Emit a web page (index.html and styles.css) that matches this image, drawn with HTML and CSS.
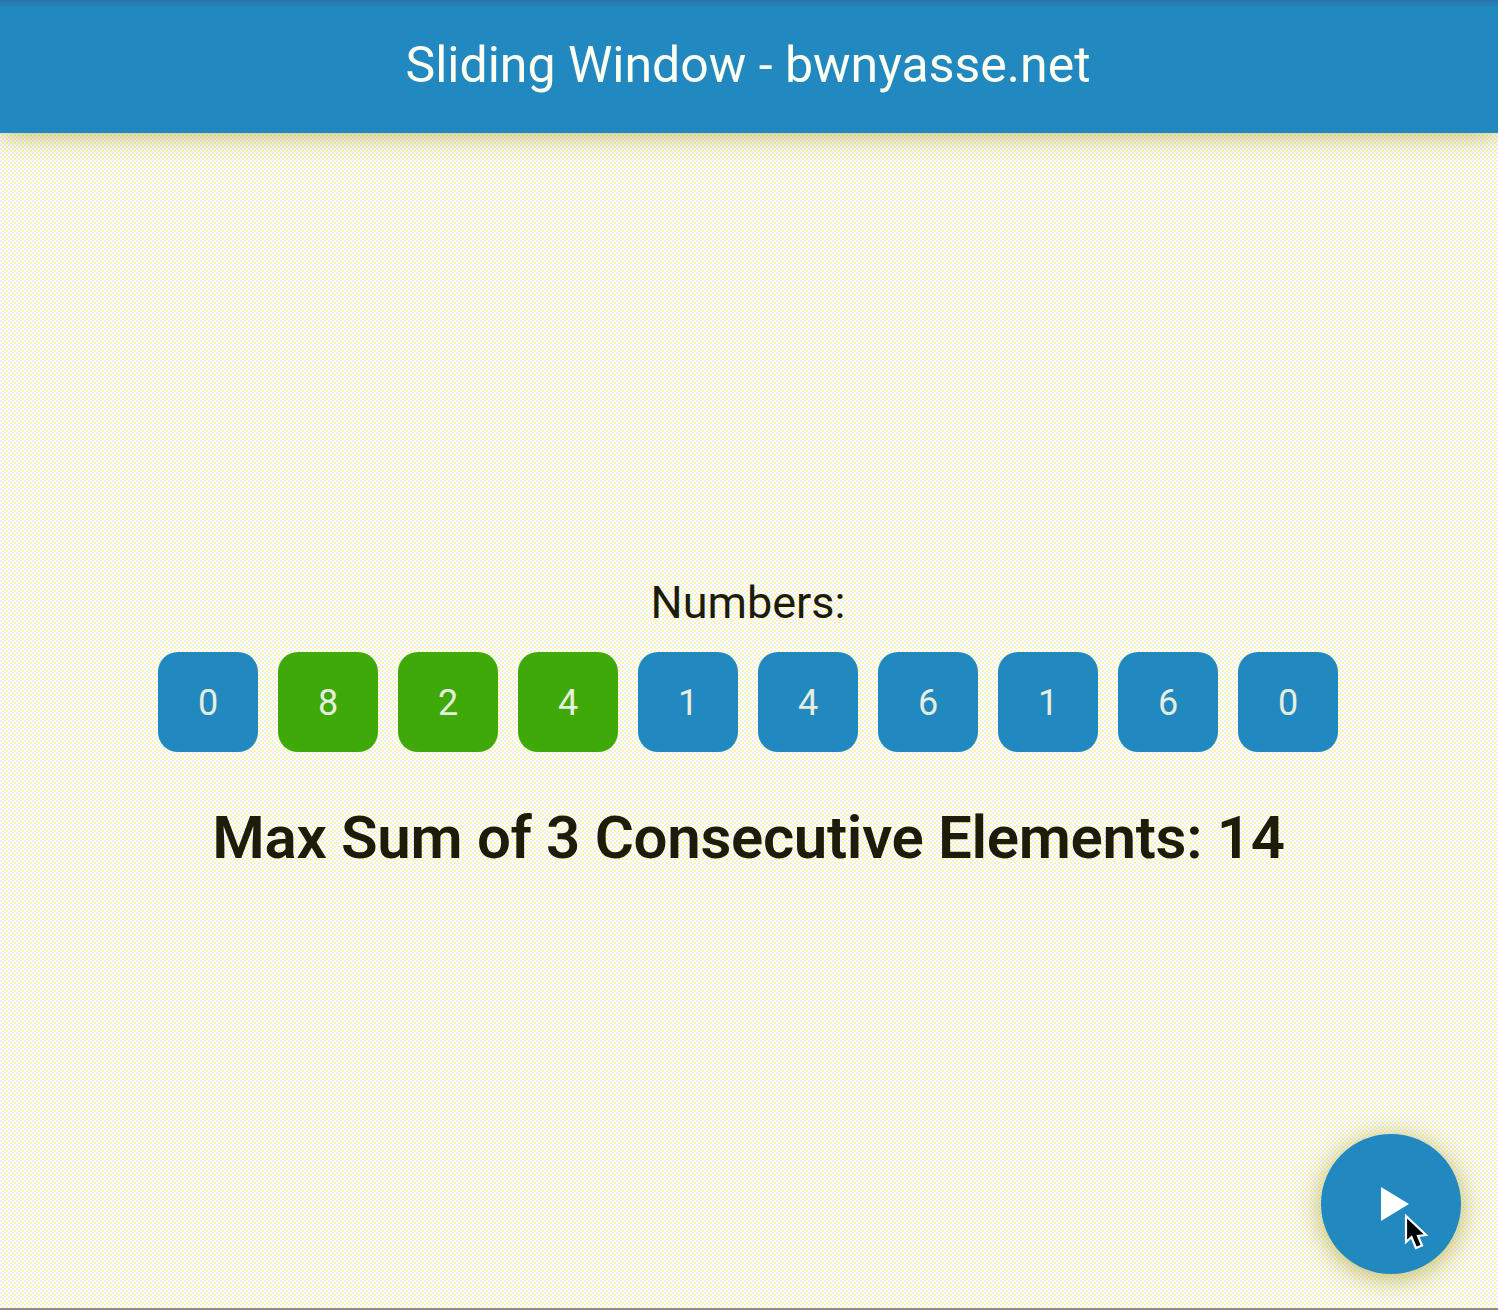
FILE: index.html
```html
<!DOCTYPE html>
<html lang="en">
<head>
    <meta charset="UTF-8">
    <meta name="viewport" content="width=device-width, initial-scale=1.0">
    <title>Sliding Window - bwnyasse.net</title>
    <link rel="stylesheet" href="styles.css">
</head>
<body>
    <header class="app-bar">
        <h1>Sliding Window - bwnyasse.net</h1>
    </header>
    <main class="content">
        <p class="numbers-label">Numbers:</p>
        <div class="numbers">
            <div class="cell">0</div>
            <div class="cell active">8</div>
            <div class="cell active">2</div>
            <div class="cell active">4</div>
            <div class="cell">1</div>
            <div class="cell">4</div>
            <div class="cell">6</div>
            <div class="cell">1</div>
            <div class="cell">6</div>
            <div class="cell">0</div>
        </div>
        <h2 class="result">Max Sum of 3 Consecutive Elements: 14</h2>
    </main>
    <button class="fab" type="button" aria-label="Play">
        <svg class="play" width="30" height="36" viewBox="0 0 30 36"><path d="M1 1 L29 18 L1 35 Z" fill="#fff"/></svg>
    </button>
    <svg class="cursor" width="28" height="40" viewBox="0 0 28 40">
        <path d="M3 4 L3 30 L8.5 25 L13 36 L19 33.5 L15 24 L23 23 Z" fill="#000" stroke="#fff" stroke-width="2.2"/>
    </svg>
</body>
</html>
```

FILE: styles.css
```css
html, body {
    margin: 0;
    height: 100%;
}
body {
    position: relative;
    width: 1498px;
    height: 1310px;
    overflow: hidden;
    box-sizing: border-box;
    display: flex;
    flex-direction: column;
    font-family: Roboto, sans-serif;
    color: #1c1c08;
    background: conic-gradient(#fff 0 25%, #fbf6a4 0 50%, #fff 0 75%, #efedff 0) 0 0 / 4px 4px;
    border-bottom: 2px solid #8c8c8c;
}
.app-bar {
    height: 133px;
    box-sizing: border-box;
    padding: 0 2px 3px 0;
    flex: none;
    display: flex;
    align-items: center;
    justify-content: center;
    background: linear-gradient(#2a72ad 0, #2189c0 8px);
    box-shadow: 0 3px 26px rgba(170, 165, 60, 0.7);
}
.app-bar h1 {
    margin: 0;
    font-size: 50px;
    font-weight: 400;
    color: #fdfdf0;
}
.content {
    padding: 442px 2px 0 0;
    display: flex;
    flex-direction: column;
    align-items: center;
}
.numbers-label {
    margin: 0 0 21px;
    font-size: 45px;
    line-height: 56px;
}
.numbers {
    display: flex;
    gap: 20px;
}
.cell {
    width: 100px;
    height: 100px;
    box-sizing: border-box;
    padding-top: 2px;
    border-radius: 20px;
    display: flex;
    align-items: center;
    justify-content: center;
    background: #2189c0;
    color: #e6eede;
    font-size: 36px;
}
.cell.active {
    background: #3fa90a;
}
.result {
    margin: 51px 0 0 1px;
    font-size: 60px;
    line-height: 70px;
    font-weight: 600;
    letter-spacing: -0.32px;
}
.fab {
    position: absolute;
    left: 1321px;
    top: 1134px;
    width: 140px;
    height: 140px;
    padding: 0;
    border: none;
    border-radius: 50%;
    background: #2189c0;
    box-shadow: 0 4px 30px rgba(170, 165, 60, 0.8);
    display: flex;
    align-items: center;
    justify-content: center;
}
.play {
    margin-left: 8px;
}
.cursor {
    position: absolute;
    left: 1403px;
    top: 1212px;
}
```
